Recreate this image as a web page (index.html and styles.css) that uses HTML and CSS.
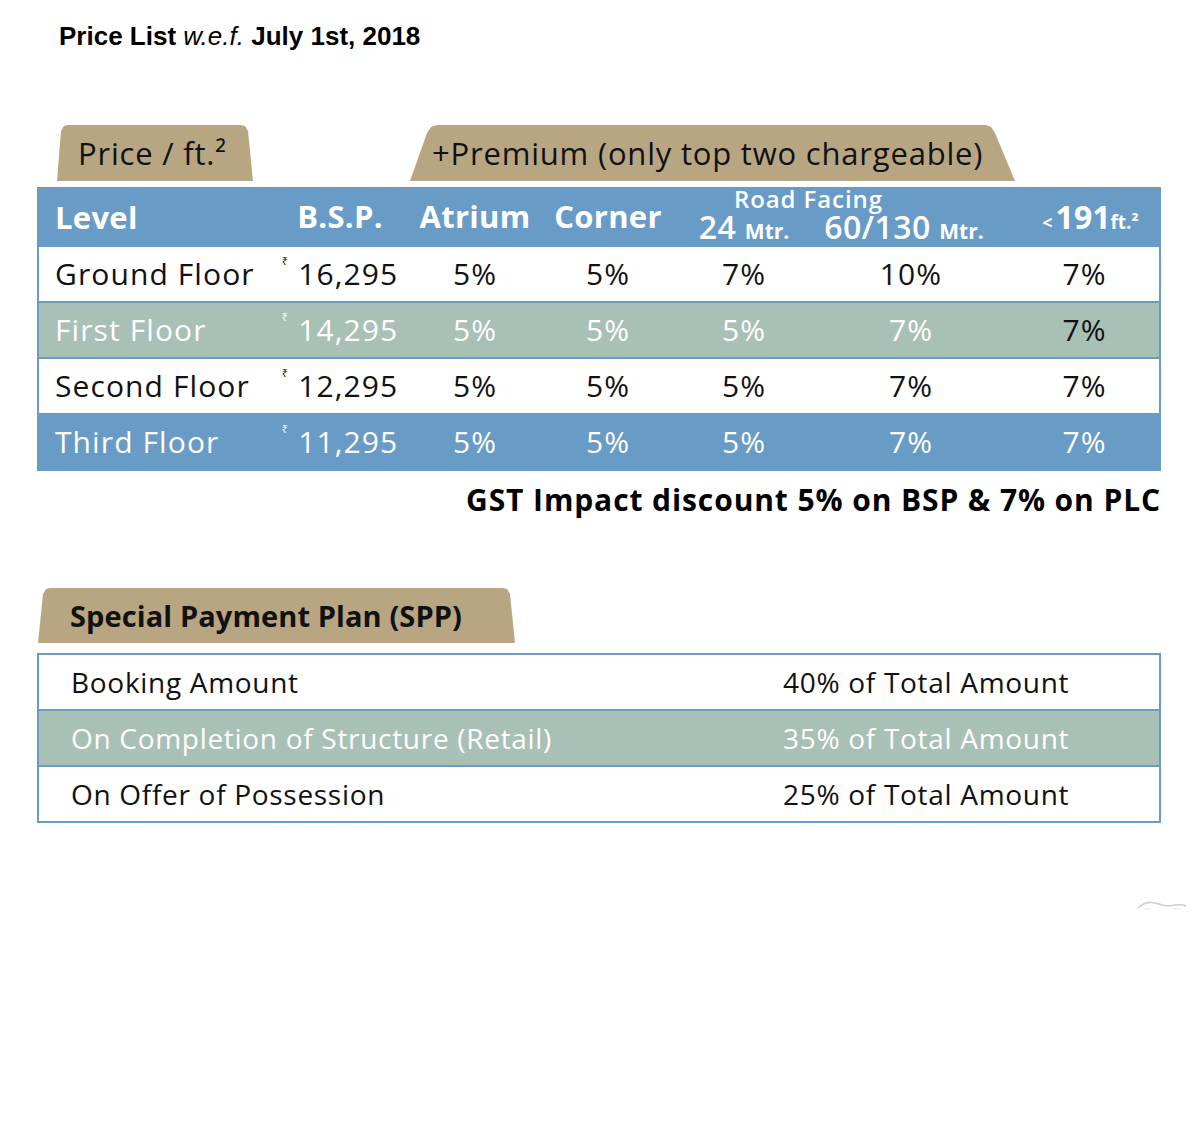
FILE: index.html
```html
<!DOCTYPE html>
<html lang="en">
<head>
<meta charset="utf-8">
<title>Price List</title>
<link rel="stylesheet" href="styles.css">
</head>
<body>
<div class="page">
  <h1 class="title">Price List <i>w.e.f.</i> July 1st, 2018</h1>

  <div class="tabs">
    <div class="tab tab-price">Price / ft.²</div>
    <div class="tab tab-premium">+Premium (only top two chargeable)</div>
  </div>

  <div class="price-table">
    <div class="row head">
      <div class="c c-level">Level</div>
      <div class="c">B.S.P.</div>
      <div class="c">Atrium</div>
      <div class="c">Corner</div>
      <div class="c road">
        <div class="road-title">Road Facing</div>
        <div class="road-sub">
          <span class="rs rs-24">24 <small>Mtr.</small></span>
          <span class="rs rs-60">60/130 <small>Mtr.</small></span>
        </div>
      </div>
      <div class="c c-size"><span class="lt">&lt;</span>191<small>ft.²</small></div>
    </div>
    <div class="row white">
      <div class="c c-level">Ground Floor</div>
      <div class="c bsp"><sup>₹</sup>16,295</div>
      <div class="c">5%</div>
      <div class="c">5%</div>
      <div class="c">7%</div>
      <div class="c">10%</div>
      <div class="c">7%</div>
    </div>
    <div class="row green">
      <div class="c c-level">First Floor</div>
      <div class="c bsp"><sup>₹</sup>14,295</div>
      <div class="c">5%</div>
      <div class="c">5%</div>
      <div class="c">5%</div>
      <div class="c">7%</div>
      <div class="c dark">7%</div>
    </div>
    <div class="row white">
      <div class="c c-level">Second Floor</div>
      <div class="c bsp"><sup>₹</sup>12,295</div>
      <div class="c">5%</div>
      <div class="c">5%</div>
      <div class="c">5%</div>
      <div class="c">7%</div>
      <div class="c">7%</div>
    </div>
    <div class="row blue">
      <div class="c c-level">Third Floor</div>
      <div class="c bsp"><sup>₹</sup>11,295</div>
      <div class="c">5%</div>
      <div class="c">5%</div>
      <div class="c">5%</div>
      <div class="c">7%</div>
      <div class="c">7%</div>
    </div>
  </div>

  <p class="gst">GST Impact discount 5% on BSP &amp; 7% on PLC</p>

  <div class="tab tab-spp">Special Payment Plan (SPP)</div>

  <div class="spp-table">
    <div class="srow white">
      <div class="s-label">Booking Amount</div>
      <div class="s-val">40% of Total Amount</div>
    </div>
    <div class="srow green">
      <div class="s-label">On Completion of Structure (Retail)</div>
      <div class="s-val">35% of Total Amount</div>
    </div>
    <div class="srow white">
      <div class="s-label">On Offer of Possession</div>
      <div class="s-val">25% of Total Amount</div>
    </div>
  </div>

  <svg class="mark" width="52" height="14" viewBox="0 0 52 14" aria-hidden="true">
    <path d="M2 10 C10 2, 18 4, 26 7 C34 10, 42 4, 50 8" fill="none" stroke="#cfcfcf" stroke-width="1.6"/>
    <path d="M8 11 L14 11 M38 11 L44 11" stroke="#e4e4e4" stroke-width="1"/>
  </svg>
</div>
</body>
</html>
```

FILE: styles.css
```css
* { box-sizing: border-box; }

html, body {
  margin: 0;
  padding: 0;
  background: #ffffff;
}

.page {
  position: relative;
  width: 1200px;
  height: 1125px;
  font-family: "Open Sans", "Noto Sans", sans-serif;
  color: #111;
  padding-top: 20px;
}

.title {
  margin: 0 0 0 59px;
  font-family: "Liberation Sans", Arial, sans-serif;
  font-size: 26px;
  font-weight: bold;
  line-height: 32px;
  color: #000;
}
.title i {
  font-weight: normal;
}

.tabs {
  display: flex;
  margin-top: 73px;
  height: 56px;
}

.tab {
  background: #b8a683;
  height: 56px;
  display: flex;
  align-items: center;
  font-size: 31px;
  color: #111;
  letter-spacing: 0.8px;
}

.tab-price {
  width: 196px;
  margin-left: 57px;
  padding-left: 21px;
  clip-path: polygon(0 100%, 4px 6px, 7px 1px, 11px 0, calc(100% - 12px) 0, calc(100% - 8px) 1px, calc(100% - 5px) 6px, 100% 100%);
}

.tab-premium {
  width: 605px;
  margin-left: 157px;
  padding-left: 22px;
  clip-path: polygon(0 100%, 17px 8px, 21px 2px, 27px 0, calc(100% - 29px) 0, calc(100% - 24px) 2px, calc(100% - 20px) 8px, 100% 100%);
}

.price-table {
  margin-top: 6px;
  margin-left: 37px;
  width: 1124px;
  border: 2px solid #689bc6;
  border-top: 0;
}

.row {
  display: grid;
  grid-template-columns: 231px 140px 130px 136px 136px 198px 149px;
  height: 56px;
  border-top: 2px solid #689bc6;
  align-items: center;
  font-size: 30px;
  letter-spacing: 1.1px;
}

.row.head {
  height: 58px;
  border-top: 0;
  background: #689bc6;
  color: #fff;
  font-weight: bold;
  font-size: 31px;
  letter-spacing: 0.3px;
}

.row.white { background: #fff; color: #111; }
.row.green { background: #a8c0b6; color: #fff; }
.row.blue { background: #689bc6; color: #fff; }
.row .dark { color: #111; }

.c {
  text-align: center;
  white-space: nowrap;
  line-height: 1;
}

.c-level {
  text-align: left;
  padding-left: 16px;
}

.head .c-level { padding-top: 2px; }

.bsp {
  padding-left: 0;
}
.bsp sup {
  font-size: 11px;
  vertical-align: top;
  position: relative;
  top: -4px;
  margin-right: 9px;
}

.road {
  grid-column: span 2;
  align-self: stretch;
  display: flex;
  flex-direction: column;
}

.road-title {
  font-size: 24px;
  font-weight: 600;
  line-height: 24px;
  padding-left: 58px;
  text-align: left;
  letter-spacing: 0.9px;
}

.road-sub {
  display: grid;
  grid-template-columns: 136px 198px;
  line-height: 30px;
  padding-top: 1px;
}

.rs {
  font-size: 32px;
  font-weight: 600;
  text-align: center;
  letter-spacing: 0.4px;
}
.rs small {
  font-size: 21px;
  font-weight: bold;
  letter-spacing: 0;
}
.rs-60 { padding-right: 14px; }

.c-size {
  font-size: 32px;
  font-weight: bold;
  padding-left: 12px;
  letter-spacing: 0;
}
.c-size .lt {
  font-size: 18px;
  font-weight: bold;
  margin-right: 3px;
}
.c-size small {
  font-size: 19px;
  font-weight: bold;
}

.gst {
  margin: 9px 0 0 0;
  width: 1161px;
  text-align: right;
  font-size: 30px;
  font-weight: bold;
  line-height: 40px;
  color: #000;
  letter-spacing: 0.9px;
}

.tab-spp {
  margin-top: 68px;
  margin-left: 38px;
  width: 477px;
  height: 55px;
  padding-left: 32px;
  font-size: 29px;
  font-weight: bold;
  letter-spacing: 0.1px;
  color: #111;
  clip-path: polygon(0 100%, 5px 6px, 8px 1px, 12px 0, calc(100% - 12px) 0, calc(100% - 8px) 1px, calc(100% - 5px) 6px, 100% 100%);
}

.spp-table {
  margin-top: 10px;
  margin-left: 37px;
  width: 1124px;
  border: 2px solid #689bc6;
  border-top: 0;
}

.srow {
  display: grid;
  grid-template-columns: 744px 1fr;
  align-items: center;
  height: 56px;
  border-top: 2px solid #689bc6;
  font-size: 28px;
  letter-spacing: 0.7px;
}
.srow.white { background: #fff; color: #111; }
.srow.green { background: #a8c0b6; color: #fff; }

.s-label {
  padding-left: 32px;
  white-space: nowrap;
}
.s-val { white-space: nowrap; }

.mark {
  position: absolute;
  left: 1136px;
  top: 898px;
}
```
